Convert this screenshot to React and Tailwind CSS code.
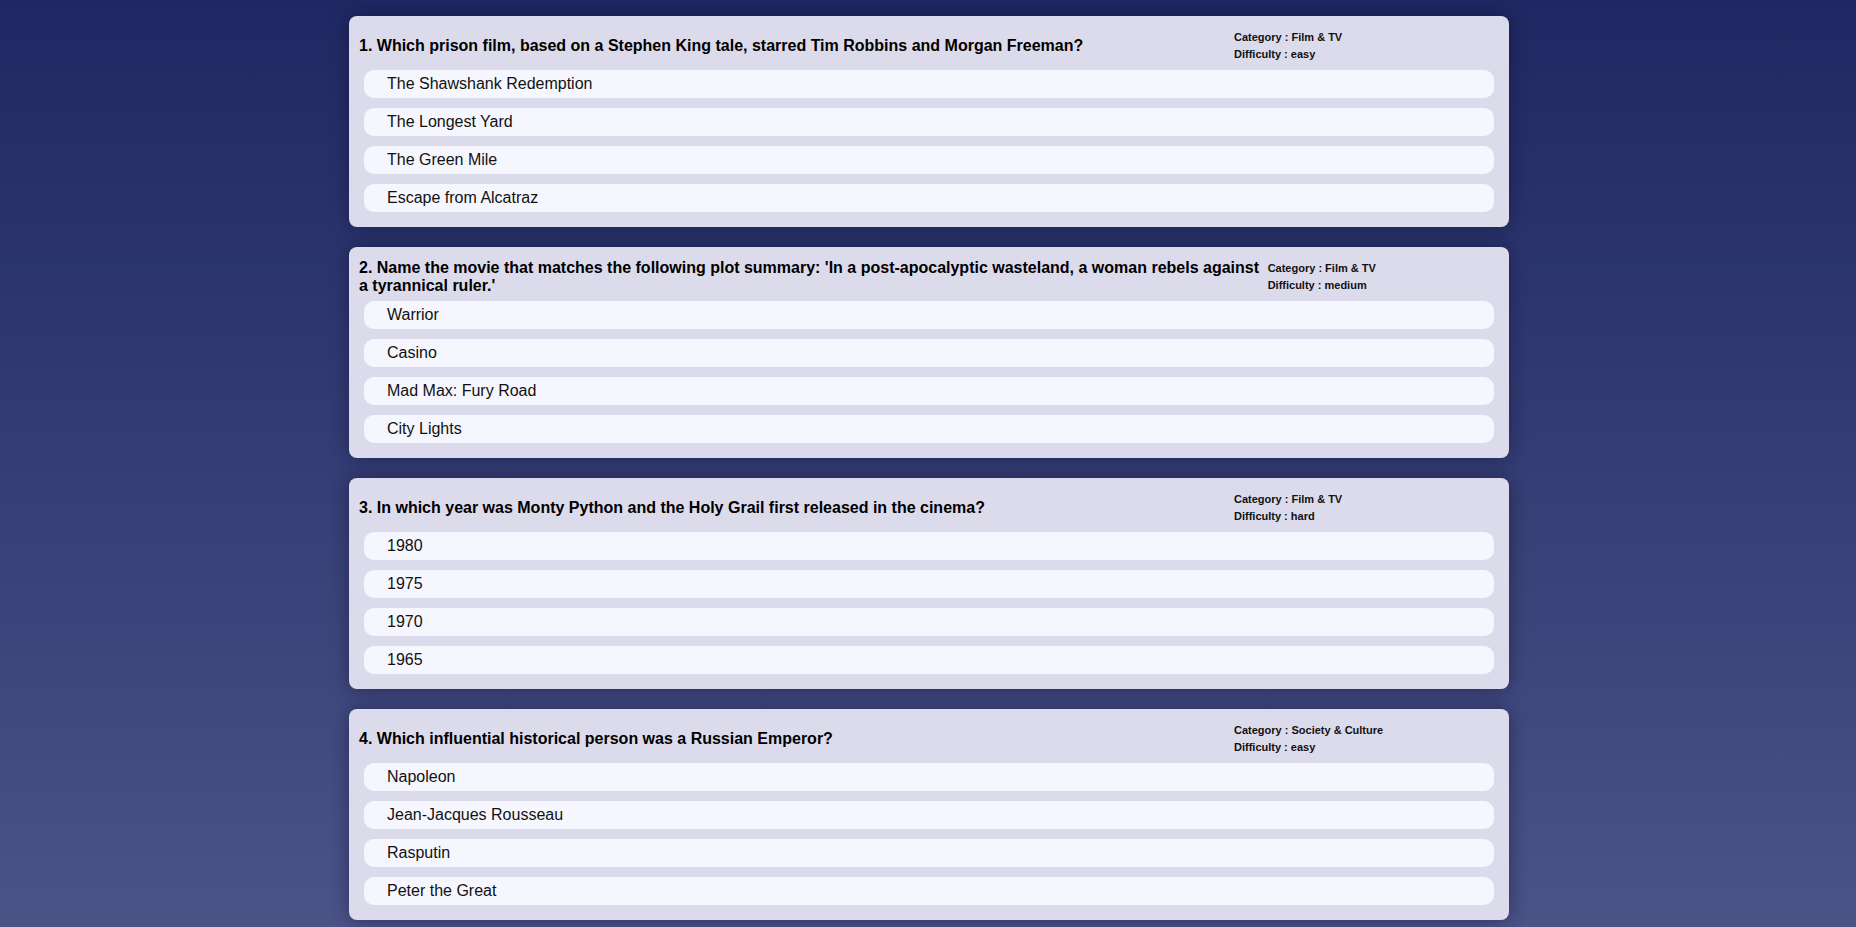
const questions = [
  {
    q: "1. Which prison film, based on a Stephen King tale, starred Tim Robbins and Morgan Freeman?",
    category: "Film & TV",
    difficulty: "easy",
    answers: ["The Shawshank Redemption", "The Longest Yard", "The Green Mile", "Escape from Alcatraz"],
  },
  {
    q: "2. Name the movie that matches the following plot summary: 'In a post-apocalyptic wasteland, a woman rebels against a tyrannical ruler.'",
    category: "Film & TV",
    difficulty: "medium",
    answers: ["Warrior", "Casino", "Mad Max: Fury Road", "City Lights"],
  },
  {
    q: "3. In which year was Monty Python and the Holy Grail first released in the cinema?",
    category: "Film & TV",
    difficulty: "hard",
    answers: ["1980", "1975", "1970", "1965"],
  },
  {
    q: "4. Which influential historical person was a Russian Emperor?",
    category: "Society & Culture",
    difficulty: "easy",
    answers: ["Napoleon", "Jean-Jacques Rousseau", "Rasputin", "Peter the Great"],
  },
];

function QuestionCard({ item }) {
  return (
    <div className="w-[1160px] ml-[2px] bg-[#dcdbec] rounded-lg pl-[10px] pr-[10px] pt-[13px] pb-[15px] shadow-[0_0_18px_rgba(10,12,40,0.45)]">
      <div className="flex items-center justify-between h-[34px]">
        <h2 className="text-[16px] leading-[18px] font-bold text-black">{item.q}</h2>
        <div className="w-[265px] text-[11px] leading-[17px] font-bold text-[#111]">
          <p>Category : {item.category}</p>
          <p>Difficulty : {item.difficulty}</p>
        </div>
      </div>
      <div className="mt-[7px] flex flex-col gap-[10px] ml-[5px] mr-[5px]">
        {item.answers.map((a) => (
          <div
            key={a}
            className="h-[28px] flex items-center pl-[23px] bg-[#f6f7fe] rounded-[10px] text-[16px] text-[#111]"
          >
            {a}
          </div>
        ))}
      </div>
    </div>
  );
}

export default function App() {
  return (
    <div
      className="min-h-screen bg-gradient-to-b from-[#1f2862] to-[#4b5387] pt-[16px] pb-[7px] flex flex-col items-center gap-[20px]"
      style={{ fontFamily: '"Liberation Sans", Arial, sans-serif' }}
    >
      {questions.map((item) => (
        <QuestionCard key={item.q} item={item} />
      ))}
    </div>
  );
}
